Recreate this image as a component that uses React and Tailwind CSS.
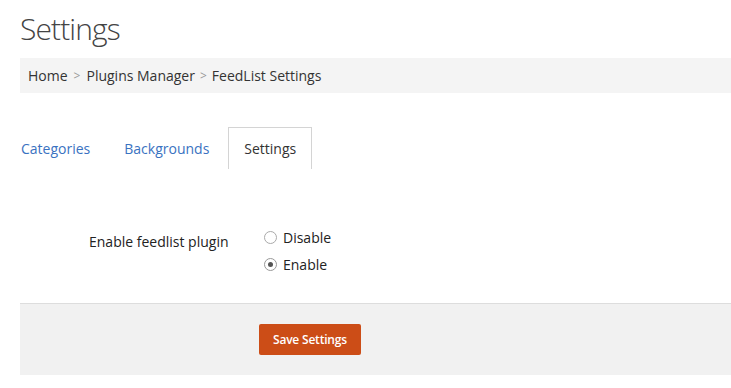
export default function App() {
  return (
    <div className="min-h-screen bg-white pl-5 font-['Open_Sans',sans-serif] text-[#333]">
      <h1 className="pt-[10px] text-[30px] leading-[38px] font-light text-[#444] tracking-[-0.9px]">Settings</h1>

      <div className="mt-[10px] flex h-[35px] items-center bg-[#f4f4f4] pl-2 text-[14px] text-[#333]">
        <span>Home</span>
        <span className="mx-[6px] text-[12px] text-[#999]">&gt;</span>
        <span>Plugins Manager</span>
        <span className="mx-[5px] text-[12px] text-[#999]">&gt;</span>
        <span>FeedList Settings</span>
      </div>

      <div className="mt-[34px] flex h-[42px] items-stretch text-[14px]">
        <div className="flex items-center pl-[1px] pr-[34px] text-[#3a72c1]">Categories</div>
        <div className="flex items-center pr-[19px] text-[#3a72c1]">Backgrounds</div>
        <div className="flex items-center border border-b-0 border-[#d4d4d4] px-[15px] text-[#333]">Settings</div>
      </div>

      <div className="mt-[59px] flex items-start">
        <div className="w-[244px] pl-[69px] pt-[3px] text-[14px] text-[#222]">Enable feedlist plugin</div>
        <div className="flex flex-col gap-[9px] text-[14px] text-[#222]">
          <label className="flex h-[18px] items-center gap-[6px]">
            <span className="h-[13px] w-[13px] rounded-full border border-[#aaa] bg-white" />
            Disable
          </label>
          <label className="flex h-[18px] items-center gap-[6px]">
            <span className="flex h-[13px] w-[13px] items-center justify-center rounded-full border border-[#999] bg-white">
              <span className="h-[5px] w-[5px] rounded-full bg-[#555]" />
            </span>
            Enable
          </label>
        </div>
      </div>

      <div className="mt-[30px] h-[72px] border-t border-[#ddd] bg-[#f1f1f1] pl-[239px] pt-[20px]">
        <button className="h-[31px] rounded-[2px] bg-[#cc4d17] px-[14px] text-[12px] font-semibold tracking-[-0.2px] text-white">
          Save Settings
        </button>
      </div>
    </div>
  );
}
